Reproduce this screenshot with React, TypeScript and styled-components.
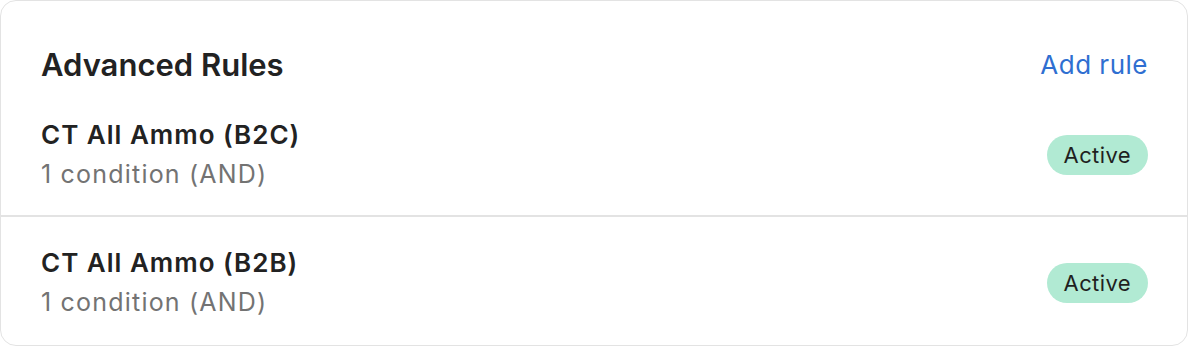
import styled, { createGlobalStyle } from "styled-components";

const GlobalStyle = createGlobalStyle`
  html, body {
    margin: 0;
    padding: 0;
    background: #ffffff;
  }
  body {
    font-family: Inter, "Noto Sans", "Liberation Sans", sans-serif;
    -webkit-font-smoothing: antialiased;
  }
`;

const Card = styled.div`
  box-sizing: border-box;
  width: 1188px;
  height: 346px;
  border: 1px solid #e3e3e3;
  border-radius: 16px;
  background: #ffffff;
  overflow: hidden;
`;

const Section = styled.div<{ $top: number; $bottom: number }>`
  padding: ${p => p.$top}px 39px ${p => p.$bottom}px 40px;
  & + & {
    border-top: 2px solid #e3e3e3;
  }
`;

const Header = styled.div`
  display: flex;
  align-items: center;
  justify-content: space-between;
  margin-bottom: 32px;
`;

const Title = styled.h2`
  margin: 0;
  font-size: 31px;
  line-height: 36px;
  font-weight: 600;
  color: #222222;
`;

const LinkButton = styled.button`
  border: 0;
  background: none;
  padding: 0;
  font-family: inherit;
  font-size: 26px;
  line-height: 36px;
  letter-spacing: 0.5px;
  color: #2f6fd1;
  cursor: pointer;
`;

const Row = styled.div`
  display: flex;
  align-items: center;
  justify-content: space-between;
`;

const RowText = styled.div`
  display: flex;
  flex-direction: column;
`;

const RuleName = styled.div`
  font-size: 26px;
  line-height: 39px;
  font-weight: 600;
  letter-spacing: 1px;
  color: #222222;
`;

const RuleMeta = styled.div`
  font-size: 25px;
  line-height: 40px;
  letter-spacing: 1.2px;
  color: #737373;
`;

const Badge = styled.span`
  display: inline-flex;
  align-items: center;
  height: 40px;
  padding: 0 17px;
  border-radius: 20px;
  background: #b1ead3;
  color: #1f1f1f;
  font-size: 22px;
  letter-spacing: 0.4px;
`;

const rules = [
  { name: "CT All Ammo (B2C)", meta: "1 condition (AND)" },
  { name: "CT All Ammo (B2B)", meta: "1 condition (AND)" },
];

function RuleRow({ name, meta }: { name: string; meta: string }) {
  return (
    <Row>
      <RowText>
        <RuleName>{name}</RuleName>
        <RuleMeta>{meta}</RuleMeta>
      </RowText>
      <Badge>Active</Badge>
    </Row>
  );
}

export default function App() {
  return (
    <>
      <GlobalStyle />
      <Card>
        <Section $top={46} $bottom={21}>
          <Header>
            <Title>Advanced Rules</Title>
            <LinkButton>Add rule</LinkButton>
          </Header>
          <RuleRow {...rules[0]} />
        </Section>
        <Section $top={26} $bottom={22}>
          <RuleRow {...rules[1]} />
        </Section>
      </Card>
    </>
  );
}
